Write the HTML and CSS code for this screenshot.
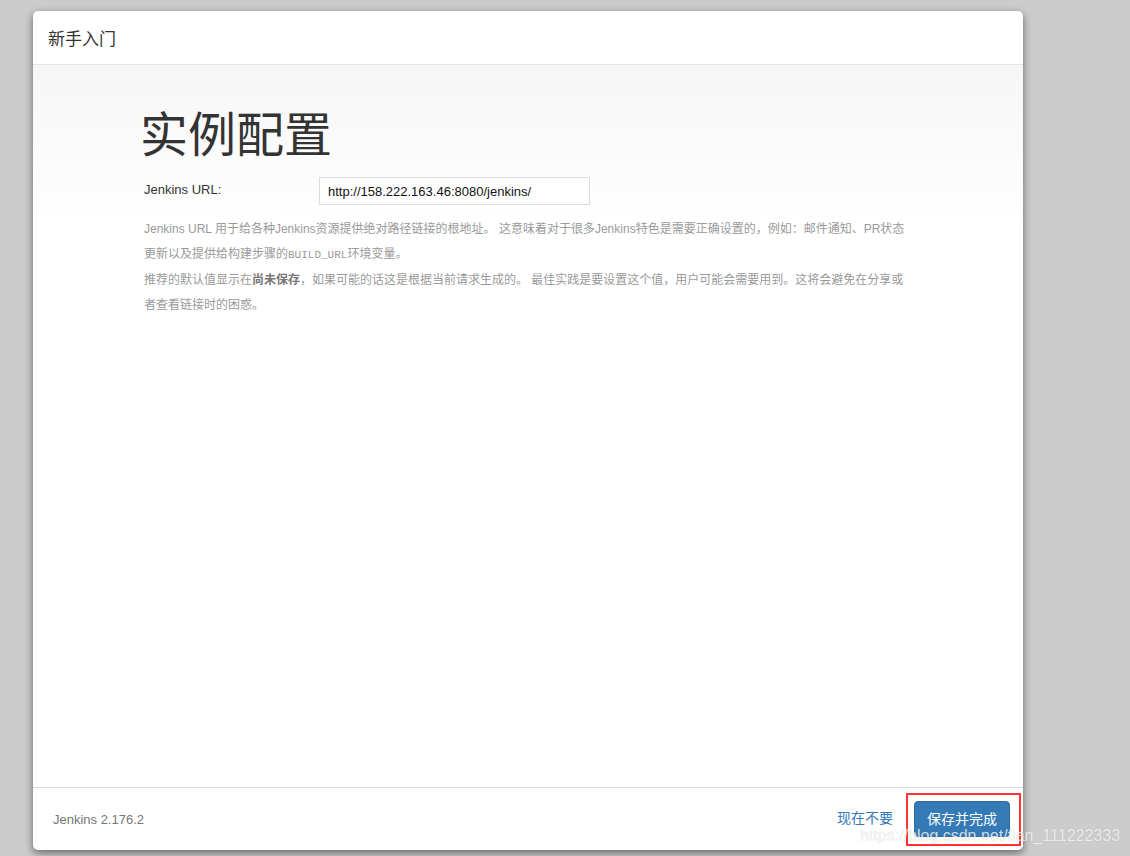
FILE: index.html
```html
<!DOCTYPE html>
<html lang="zh">
<head>
<meta charset="utf-8">
<title>新手入门</title>
<link rel="stylesheet" href="styles.css">
</head>
<body>
<div class="modal">
  <div class="modal-header">新手入门</div>
  <div class="modal-body">
    <div class="content">
      <h1 class="title">实例配置</h1>
      <div class="form-row">
        <label class="label" for="url">Jenkins URL:</label>
        <input class="input" id="url" type="text" value="http://158.222.163.46:8080/jenkins/">
      </div>
      <div class="help">
        <p>Jenkins URL 用于给各种Jenkins资源提供绝对路径链接的根地址。 这意味着对于很多Jenkins特色是需要正确设置的，例如：邮件通知、PR状态<br>更新以及提供给构建步骤的<code>BUILD_URL</code>环境变量。</p>
        <p>推荐的默认值显示在<strong>尚未保存</strong>，如果可能的话这是根据当前请求生成的。 最佳实践是要设置这个值，用户可能会需要用到。这将会避免在分享或<br>者查看链接时的困惑。</p>
      </div>
    </div>
  </div>
  <div class="modal-footer">
    <span class="version">Jenkins 2.176.2</span>
    <div class="actions">
      <a class="skip" href="#">现在不要</a>
      <button class="btn-primary" type="button">保存并完成</button>
    </div>
  </div>
  <div class="highlight"></div>
  <div class="watermark">https://blog.csdn.net/tian_111222333</div>
</div>
</body>
</html>
```
FILE: styles.css
```css
html, body {
  margin: 0;
  padding: 0;
  background: #cccccc;
  font-family: "Liberation Sans", Arial, "Noto Sans CJK SC", sans-serif;
}
body {
  padding: 11px 0 0 33px;
  height: 856px;
  box-sizing: border-box;
  overflow: hidden;
}
.modal {
  position: relative;
  width: 990px;
  height: 839px;
  background: #fff;
  border-radius: 5px;
  box-shadow: 0 3px 9px rgba(0, 0, 0, 0.5);
  display: flex;
  flex-direction: column;
}
.modal-header {
  height: 54px;
  box-sizing: border-box;
  padding: 0 15px;
  display: flex;
  align-items: center;
  font-size: 17px;
  color: #333;
  border-bottom: 1px solid #e5e5e5;
  flex: none;
}
.modal-body {
  flex: 1;
  background: linear-gradient(#f6f6f6, #ffffff 160px);
}
.content {
  padding: 36px 0 0 108px;
}
.title {
  margin: 0 0 0 -1px;
  font-size: 48px;
  font-weight: 400;
  line-height: 60px;
  color: #333;
  font-family: "Noto Sans CJK SC", sans-serif;
}
.form-row {
  display: flex;
  align-items: flex-start;
  margin-top: 16px;
  padding-left: 3px;
}
.label {
  width: 175px;
  font-size: 13px;
  color: #333;
  padding-top: 5px;
}
.input {
  width: 271px;
  height: 28px;
  box-sizing: border-box;
  border: 1px solid #ddd;
  padding: 0 8px;
  font-family: "Liberation Sans", Arial, sans-serif;
  font-size: 13px;
  color: #111;
  background: #fff;
  outline: none;
}
.help {
  margin-top: 12px;
  padding-left: 3px;
  font-size: 12px;
  line-height: 25px;
  color: #9a9a9a;
}
.help p {
  margin: 0;
  white-space: nowrap;
}
.help code {
  font-family: "Liberation Mono", monospace;
  font-size: 11px;
}
.help strong {
  color: #777;
}
.modal-footer {
  flex: none;
  height: 63px;
  box-sizing: border-box;
  border-top: 1px solid #d8d8d8;
  padding: 0 13px 0 20px;
  display: flex;
  align-items: center;
  justify-content: space-between;
}
.version {
  font-size: 13px;
  color: #777;
  margin-top: 1px;
}
.actions {
  display: flex;
  align-items: center;
  gap: 21px;
}
.skip {
  font-size: 14px;
  color: #337ab7;
  text-decoration: none;
  margin-bottom: 4px;
}
.btn-primary {
  width: 96px;
  height: 36px;
  border: 1px solid #2e6da4;
  border-radius: 4px;
  background: #337ab7;
  color: #fff;
  font-size: 14px;
  font-family: "Liberation Sans", Arial, "Noto Sans CJK SC", sans-serif;
  padding: 0 0 3px;
}
.highlight {
  position: absolute;
  left: 873px;
  top: 782px;
  width: 115px;
  height: 53px;
  box-sizing: border-box;
  border: 2px solid #f33;
}
.watermark {
  position: absolute;
  left: 827px;
  top: 816px;
  font-size: 16px;
  color: rgba(255, 255, 255, 0.8);
  white-space: nowrap;
  font-family: "Liberation Sans", Arial, sans-serif;
  text-shadow: 0 0 1px rgba(0,0,0,0.2);
}
```
